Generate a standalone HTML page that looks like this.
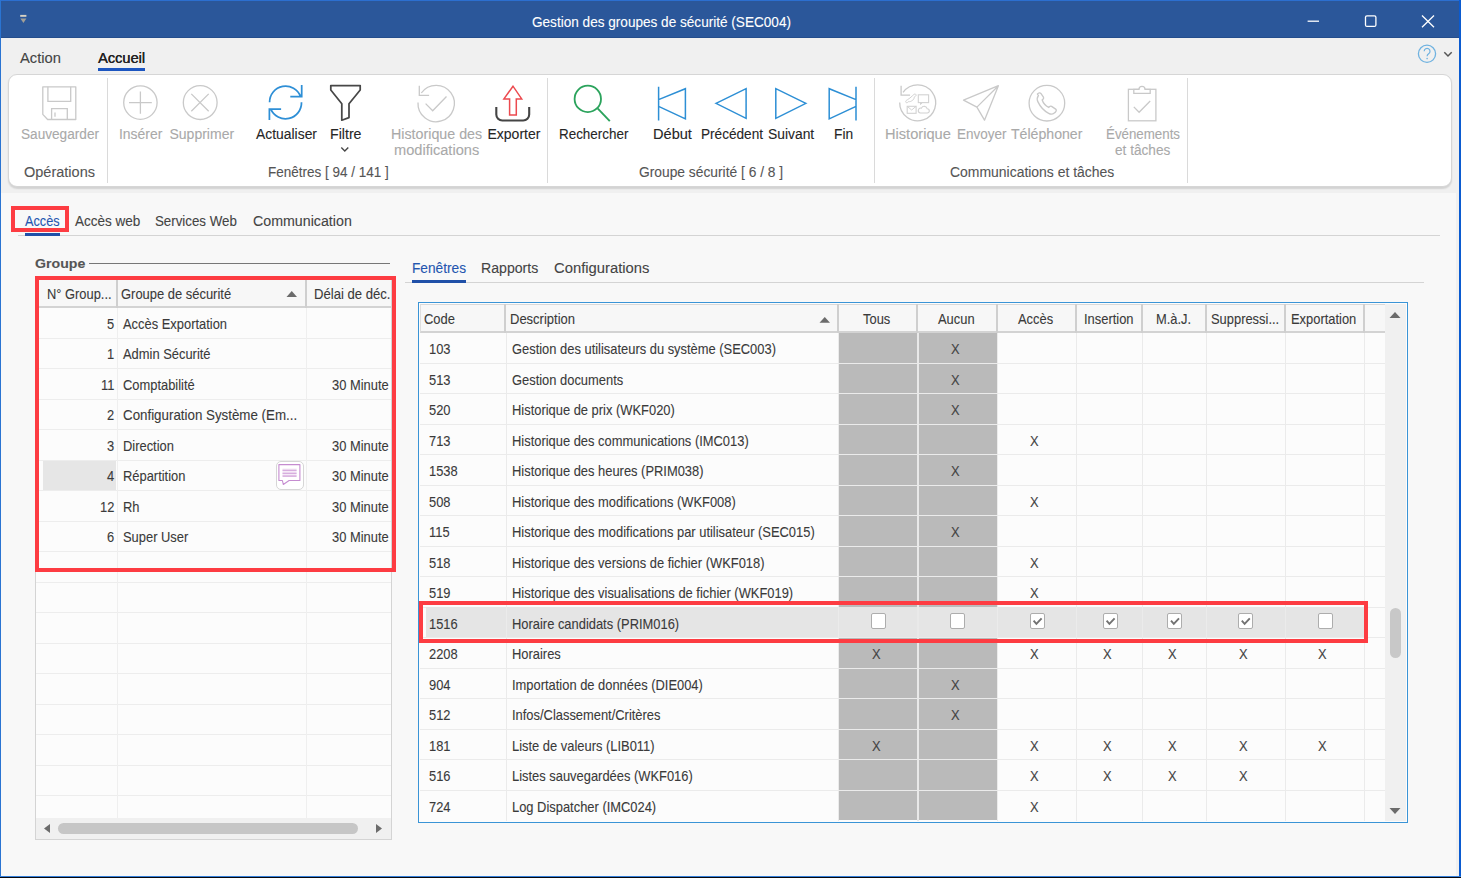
<!DOCTYPE html><html><head><meta charset="utf-8"><style>
html,body{margin:0;padding:0;}
body{width:1461px;height:878px;position:relative;overflow:hidden;background:#f8f8f8;font-family:"Liberation Sans",sans-serif;}
.t{position:absolute;white-space:pre;-webkit-text-stroke:0.1px currentColor;}
.r{position:absolute;box-sizing:border-box;}
svg{position:absolute;overflow:visible;}
</style></head><body>
<div class="r" style="left:0px;top:38px;width:1461px;height:155px;background:#f0f0f0"></div>
<div class="r" style="left:0px;top:0px;width:1461px;height:38px;background:#2b579a"></div>
<div class="r" style="left:0px;top:0px;width:1461px;height:1px;background:#2c6fd0"></div>
<div class="r" style="left:0px;top:37px;width:1461px;height:1px;background:#244d8c"></div>
<div class="t " style="left:531.50px;top:13.28px;font-size:14.5px;line-height:18px;font-weight:normal;color:#ffffff;transform:scaleX(0.9368);transform-origin:0 0;">Gestion des groupes de sécurité (SEC004)</div>
<div class="r" style="left:0px;top:0px;width:1px;height:878px;background:#2a74d2"></div>
<div class="r" style="left:1459px;top:0px;width:2px;height:878px;background:#0b5bd0"></div>
<div class="r" style="left:0px;top:876px;width:1461px;height:1px;background:#3580da"></div>
<div class="r" style="left:0px;top:877px;width:1461px;height:1px;background:#06080e"></div>
<div class="r" style="left:1456px;top:193px;width:3px;height:683px;background:#f0f0f0"></div>
<div class="t " style="left:19.50px;top:48.65px;font-size:14px;line-height:18px;font-weight:normal;color:#444;transform:scaleX(1.0534);transform-origin:0 0;">Action</div>
<div class="t " style="left:97.50px;top:48.65px;font-size:14px;line-height:18px;font-weight:normal;color:#222;transform:scaleX(1.0412);transform-origin:0 0;text-shadow:0.3px 0 0 #222;">Accueil</div>
<div class="r" style="left:98px;top:68px;width:47px;height:3px;background:#1b55c0"></div>
<div class="r" style="left:8px;top:74px;width:1444px;height:113px;background:#fff;border:1px solid #d6d6d6;border-radius:9px;box-shadow:0 1.5px 1.5px rgba(0,0,0,0.12)"></div>
<div class="r" style="left:107px;top:78px;width:1px;height:105px;background:#dadada"></div>
<div class="r" style="left:547px;top:78px;width:1px;height:105px;background:#dadada"></div>
<div class="r" style="left:874px;top:78px;width:1px;height:105px;background:#dadada"></div>
<div class="r" style="left:1187px;top:78px;width:1px;height:105px;background:#dadada"></div>
<div class="t " style="left:20.50px;top:125.05px;font-size:14px;line-height:18px;font-weight:normal;color:#a9a9a9;transform:scaleX(0.9729);transform-origin:0 0;">Sauvegarder</div>
<div class="t " style="left:118.50px;top:125.05px;font-size:14px;line-height:18px;font-weight:normal;color:#a9a9a9;transform:scaleX(0.9936);transform-origin:0 0;">Insérer</div>
<div class="t " style="left:169.50px;top:125.05px;font-size:14px;line-height:18px;font-weight:normal;color:#a9a9a9;">Supprimer</div>
<div class="t " style="left:255.70px;top:125.05px;font-size:14px;line-height:18px;font-weight:normal;color:#262626;transform:scaleX(0.9924);transform-origin:0 0;">Actualiser</div>
<div class="t " style="left:330.00px;top:125.05px;font-size:14px;line-height:18px;font-weight:normal;color:#262626;transform:scaleX(1.0120);transform-origin:0 0;">Filtre</div>
<div class="t " style="left:391.30px;top:125.05px;font-size:14px;line-height:18px;font-weight:normal;color:#a9a9a9;transform:scaleX(1.0190);transform-origin:0 0;">Historique des</div>
<div class="t " style="left:393.60px;top:141.15px;font-size:14px;line-height:18px;font-weight:normal;color:#a9a9a9;transform:scaleX(1.0428);transform-origin:0 0;">modifications</div>
<div class="t " style="left:487.50px;top:125.05px;font-size:14px;line-height:18px;font-weight:normal;color:#262626;">Exporter</div>
<div class="t " style="left:558.50px;top:125.05px;font-size:14px;line-height:18px;font-weight:normal;color:#262626;transform:scaleX(0.9589);transform-origin:0 0;">Rechercher</div>
<div class="t " style="left:653.40px;top:125.05px;font-size:14px;line-height:18px;font-weight:normal;color:#262626;transform:scaleX(1.0412);transform-origin:0 0;">Début</div>
<div class="t " style="left:700.80px;top:125.05px;font-size:14px;line-height:18px;font-weight:normal;color:#262626;transform:scaleX(0.9714);transform-origin:0 0;">Précédent</div>
<div class="t " style="left:768.10px;top:125.05px;font-size:14px;line-height:18px;font-weight:normal;color:#262626;transform:scaleX(0.9892);transform-origin:0 0;">Suivant</div>
<div class="t " style="left:834.10px;top:125.05px;font-size:14px;line-height:18px;font-weight:normal;color:#262626;transform:scaleX(0.9818);transform-origin:0 0;">Fin</div>
<div class="t " style="left:884.90px;top:125.05px;font-size:14px;line-height:18px;font-weight:normal;color:#a9a9a9;transform:scaleX(1.0439);transform-origin:0 0;">Historique</div>
<div class="t " style="left:956.50px;top:125.05px;font-size:14px;line-height:18px;font-weight:normal;color:#a9a9a9;transform:scaleX(0.9638);transform-origin:0 0;">Envoyer</div>
<div class="t " style="left:1011.40px;top:125.05px;font-size:14px;line-height:18px;font-weight:normal;color:#a9a9a9;transform:scaleX(1.0081);transform-origin:0 0;">Téléphoner</div>
<div class="t " style="left:1105.50px;top:125.05px;font-size:14px;line-height:18px;font-weight:normal;color:#a9a9a9;transform:scaleX(0.9508);transform-origin:0 0;">Événements</div>
<div class="t " style="left:1114.50px;top:140.85px;font-size:14px;line-height:18px;font-weight:normal;color:#a9a9a9;transform:scaleX(0.9731);transform-origin:0 0;">et tâches</div>
<div class="t " style="left:24.00px;top:162.95px;font-size:14px;line-height:18px;font-weight:normal;color:#555;transform:scaleX(1.0367);transform-origin:0 0;">Opérations</div>
<div class="t " style="left:267.80px;top:162.95px;font-size:14px;line-height:18px;font-weight:normal;color:#555;transform:scaleX(0.9633);transform-origin:0 0;">Fenêtres [ 94 / 141 ]</div>
<div class="t " style="left:638.90px;top:162.95px;font-size:14px;line-height:18px;font-weight:normal;color:#555;transform:scaleX(0.9857);transform-origin:0 0;">Groupe sécurité [ 6 / 8 ]</div>
<div class="t " style="left:949.70px;top:162.95px;font-size:14px;line-height:18px;font-weight:normal;color:#555;transform:scaleX(0.9959);transform-origin:0 0;">Communications et tâches</div>
<svg style="left:0;top:0" width="1461" height="200" viewBox="0 0 1461 200">
<rect x="20.2" y="14.9" width="6.2" height="1.9" fill="#d8d2c4"/><polygon points="20.4,18.5 26.4,18.5 23.4,22.9" fill="#a29f96"/>
<path d="M1307.6,21.2 H1319" stroke="#fff" stroke-width="1.3"/>
<rect x="1365.5" y="15.8" width="10.4" height="10.6" rx="1.5" fill="none" stroke="#fff" stroke-width="1.3"/>
<path d="M1422,15.5 L1434,27.2 M1434,15.5 L1422,27.2" stroke="#fff" stroke-width="1.3"/>
<circle cx="1427" cy="53.8" r="8.6" fill="none" stroke="#6fb2e0" stroke-width="1.3"/>
<path d="M1424.2,51.2 a2.9,2.9 0 1 1 4.4,2.5 c-1.1,0.7 -1.5,1.3 -1.5,2.6" fill="none" stroke="#6fb2e0" stroke-width="1.2"/><circle cx="1427.1" cy="58.6" r="0.8" fill="#6fb2e0"/>
<path d="M1444.3,52.3 L1448,56 L1451.7,52.3" fill="none" stroke="#555" stroke-width="1.5"/>
<path d="M42.8,86.8 H75.8 V119.5 H47.6 L42.8,114.4 Z" fill="none" stroke="#c9c9c9" stroke-width="1.3" stroke-linejoin="round"/>
<path d="M47.9,86.8 V101.3 H70.7 V86.8" fill="none" stroke="#c9c9c9" stroke-width="1.3"/>
<path d="M51.6,119.5 V108.7 H67.3 V119.5 M55,112.4 V116.7" fill="none" stroke="#c9c9c9" stroke-width="1.3"/>
<circle cx="140.4" cy="102.6" r="16.7" fill="none" stroke="#c9c9c9" stroke-width="1.3"/><path d="M129,102.6 H151.8 M140.4,91.4 V113.8" stroke="#c9c9c9" stroke-width="1.3"/>
<circle cx="200.2" cy="102.6" r="16.9" fill="none" stroke="#c9c9c9" stroke-width="1.3"/><path d="M191.3,93.9 L208.7,111.3 M208.7,93.9 L191.3,111.3" stroke="#c9c9c9" stroke-width="1.3"/>
<path d="M269.6,102.3 A16,16 0 0 1 300.6,96.5 M290.3,96.5 H301.7 V85" fill="none" stroke="#2e8fd6" stroke-width="1.75"/>
<path d="M301.5,102.3 A16,16 0 0 1 270.8,109.1 M281.1,109.1 H269.4 V120.1" fill="none" stroke="#2e8fd6" stroke-width="1.75"/>
<path d="M330.8,85.6 H360.2 V90 L349,103.7 V117.6 L341.8,120.2 V103.7 L330.8,90 Z" fill="none" stroke="#474747" stroke-width="1.75" stroke-linejoin="round"/>
<path d="M341.3,147.6 L344.8,151 L348.3,147.6" fill="none" stroke="#474747" stroke-width="1.4"/>
<path d="M418,102.5 A18.2,18.2 0 1 0 421.3,93" fill="none" stroke="#c9c9c9" stroke-width="1.3"/><path d="M419.3,85.8 V95.3 H429.1" fill="none" stroke="#c9c9c9" stroke-width="1.3"/><path d="M425.6,103.6 L432.7,110.7 L446.5,96.5" fill="none" stroke="#c9c9c9" stroke-width="1.3"/>
<path d="M513,86.2 L503.9,98.9 H509.6 V115.1 H516.3 V98.9 H521.7 Z" fill="none" stroke="#ec4a4f" stroke-width="1.5" stroke-linejoin="miter"/>
<path d="M496.3,107.1 V114.5 A6,6 0 0 0 502.3,120.5 H523.2 A6,6 0 0 0 529.2,114.5 V107.1" fill="none" stroke="#444" stroke-width="2.1"/>
<circle cx="587.8" cy="98.9" r="13.2" fill="none" stroke="#2ba35c" stroke-width="1.8"/><path d="M597.6,108.4 L609.8,121.1" stroke="#2ba35c" stroke-width="1.9"/>
<path d="M658.6,86.8 V120.4 M658.6,99.6 L685.4,88.7 V118.9 L658.6,106.4" fill="none" stroke="#2d8fd5" stroke-width="1.5"/>
<path d="M716,103.3 L746.1,88.7 V118.4 Z" fill="none" stroke="#2d8fd5" stroke-width="1.5"/>
<path d="M805.9,103.3 L775.8,88.7 V118.4 Z" fill="none" stroke="#2d8fd5" stroke-width="1.5"/>
<path d="M856,86.8 V120.4 M856,99.6 L829.2,88.7 V118.9 L856,106.4" fill="none" stroke="#2d8fd5" stroke-width="1.5"/>
<path d="M899.7,102.6 A18,18 0 1 0 903.1,92.3" fill="none" stroke="#c9c9c9" stroke-width="1.3"/><path d="M901.1,85.7 V95.2 H910.1" fill="none" stroke="#c9c9c9" stroke-width="1.3"/>
<rect x="918.3" y="94.8" width="10.3" height="7.8" fill="none" stroke="#d2d2d2" stroke-width="1.1"/><path d="M920.5,102.6 L920.5,104.5 L922.5,102.6" fill="none" stroke="#d2d2d2" stroke-width="1"/>
<path d="M915.6,94.2 c0.9,0.6 0.5,1.6 -0.3,2.2 l-1.2,0.9 c0.2,1.2 -0.6,2.4 -1.8,3.2 c-1.4,1 -2.7,1.4 -3.5,1 l-1,0.8 c-0.8,0.6 -1.9,0.5 -2.1,-0.3 c-0.3,-1 0.8,-1.8 1.8,-2.3 c1.6,-0.8 3.2,-2.3 4.8,-3.8 c1.1,-1 2.4,-2.4 3.3,-1.7 z" fill="none" stroke="#d2d2d2" stroke-width="1"/>
<rect x="907.2" y="106.3" width="8.9" height="7" fill="none" stroke="#d2d2d2" stroke-width="1.1"/><path d="M907.2,106.3 L911.65,110 L916.1,106.3" fill="none" stroke="#d2d2d2" stroke-width="1"/>
<path d="M920.2,113 H927.2 a2.1,2.1 0 0 0 0,-4.2 a3,3 0 0 0 -5.7,-0.7 a2.5,2.5 0 0 0 -1.3,4.9 z" fill="none" stroke="#d2d2d2" stroke-width="1.1"/>
<path d="M963.5,100.1 L998.4,85.7 L984.5,120.2 L976.9,107.1 Z M976.9,107.1 L998.4,85.7" fill="none" stroke="#c9c9c9" stroke-width="1.3" stroke-linejoin="round"/>
<circle cx="1046.9" cy="103.2" r="17.8" fill="none" stroke="#c9c9c9" stroke-width="1.3"/>
<path transform="translate(1037.5,94) scale(1.12) translate(-1037.5,-94.5)" d="M1037.5,94.5 c1,-1 2.3,-1.3 3,-0.5 l2.3,3.3 c0.4,0.7 0.1,1.5 -0.5,2 l-0.6,0.5 c0.8,2.5 3.2,5.3 5.8,6.6 l0.6,-0.6 c0.6,-0.5 1.4,-0.6 2,-0.2 l3.6,2.4 c0.8,0.6 0.7,1.8 -0.2,2.7 l-1,0.8 c-1.5,1.2 -3.3,1.2 -5,0.3 c-4.2,-2.3 -7.7,-6.2 -9.7,-10.5 c-0.8,-1.8 -0.7,-3.8 0.5,-5.4 z" fill="none" stroke="#c9c9c9" stroke-width="1.2"/>
<rect x="1128.4" y="89.3" width="27.5" height="31.5" fill="none" stroke="#c9c9c9" stroke-width="1.3"/><path d="M1133.8,89.3 V93.3 H1150.2 V89.3 H1145 A3,3 0 0 0 1139,89.3 Z" fill="#fff" stroke="#c9c9c9" stroke-width="1.3"/><path d="M1133.8,106.9 L1139.1,112.3 L1150.2,101" fill="none" stroke="#c9c9c9" stroke-width="1.3"/>
</svg>
<div class="r" style="left:18px;top:235px;width:1422px;height:1px;background:#d4d4d4"></div>
<div class="t " style="left:25.10px;top:211.95px;font-size:14px;line-height:18px;font-weight:normal;color:#2456b0;transform:scaleX(0.9075);transform-origin:0 0;">Accès</div>
<div class="t " style="left:74.50px;top:211.95px;font-size:14px;line-height:18px;font-weight:normal;color:#444;transform:scaleX(0.9660);transform-origin:0 0;">Accès web</div>
<div class="t " style="left:155.30px;top:211.95px;font-size:14px;line-height:18px;font-weight:normal;color:#444;transform:scaleX(0.9500);transform-origin:0 0;">Services Web</div>
<div class="t " style="left:253.30px;top:211.95px;font-size:14px;line-height:18px;font-weight:normal;color:#444;transform:scaleX(1.0158);transform-origin:0 0;">Communication</div>
<div class="r" style="left:25px;top:233px;width:35px;height:3px;background:#2050a8"></div>
<div class="r" style="left:11px;top:206px;width:58px;height:26px;border:4px solid #fd3c42"></div>
<div class="t " style="left:34.50px;top:255.02px;font-size:13.5px;line-height:17px;font-weight:bold;color:#555;transform:scaleX(1.0476);transform-origin:0 0;">Groupe</div>
<div class="r" style="left:89px;top:263px;width:301px;height:1px;background:#777"></div>
<div class="r" style="left:35px;top:279px;width:357px;height:561px;background:#fcfcfc;border:1px solid #d4d4d4"></div>
<div class="r" style="left:36px;top:280px;width:355px;height:28px;background:#f7f7f7;border-bottom:2px solid #d3d3d3"></div>
<div class="r" style="left:116px;top:280px;width:2px;height:28px;background:#cfcfcf"></div>
<div class="r" style="left:305px;top:280px;width:2px;height:28px;background:#cfcfcf"></div>
<div class="r" style="left:36px;top:337.5px;width:355px;height:1px;background:#ededed"></div>
<div class="r" style="left:36px;top:368.0px;width:355px;height:1px;background:#ededed"></div>
<div class="r" style="left:36px;top:398.5px;width:355px;height:1px;background:#ededed"></div>
<div class="r" style="left:36px;top:429.0px;width:355px;height:1px;background:#ededed"></div>
<div class="r" style="left:36px;top:459.5px;width:355px;height:1px;background:#ededed"></div>
<div class="r" style="left:36px;top:490.0px;width:355px;height:1px;background:#ededed"></div>
<div class="r" style="left:36px;top:520.5px;width:355px;height:1px;background:#ededed"></div>
<div class="r" style="left:36px;top:551.0px;width:355px;height:1px;background:#ededed"></div>
<div class="r" style="left:36px;top:581.5px;width:355px;height:1px;background:#ededed"></div>
<div class="r" style="left:36px;top:612.0px;width:355px;height:1px;background:#ededed"></div>
<div class="r" style="left:36px;top:642.5px;width:355px;height:1px;background:#ededed"></div>
<div class="r" style="left:36px;top:673.0px;width:355px;height:1px;background:#ededed"></div>
<div class="r" style="left:36px;top:703.5px;width:355px;height:1px;background:#ededed"></div>
<div class="r" style="left:36px;top:734.0px;width:355px;height:1px;background:#ededed"></div>
<div class="r" style="left:36px;top:764.5px;width:355px;height:1px;background:#ededed"></div>
<div class="r" style="left:36px;top:795.0px;width:355px;height:1px;background:#ededed"></div>
<div class="r" style="left:117px;top:308px;width:1px;height:510px;background:#efefef"></div>
<div class="r" style="left:306px;top:308px;width:1px;height:510px;background:#efefef"></div>
<div class="t " style="left:46.90px;top:284.88px;font-size:14.5px;line-height:18px;font-weight:normal;color:#3a3a3a;transform:scaleX(0.8887);transform-origin:0 0;">N° Group...</div>
<div class="t " style="left:120.70px;top:284.88px;font-size:14.5px;line-height:18px;font-weight:normal;color:#3a3a3a;transform:scaleX(0.8927);transform-origin:0 0;">Groupe de sécurité</div>
<div class="t " style="left:313.90px;top:284.88px;font-size:14.5px;line-height:18px;font-weight:normal;color:#3a3a3a;transform:scaleX(0.9026);transform-origin:0 0;">Délai de déc.</div>
<svg style="left:0;top:0" width="1" height="1"><polygon points="286.5,297 297,297 291.75,291" fill="#6b6b6b"/></svg>
<div class="r" style="left:43px;top:461px;width:73px;height:29px;background:#e6e6e6"></div>
<div class="t " style="left:106.81px;top:314.98px;font-size:14.5px;line-height:18px;font-weight:normal;color:#3a3a3a;transform:scaleX(0.8900);transform-origin:0 0;">5</div>
<div class="t " style="left:122.60px;top:314.98px;font-size:14.5px;line-height:18px;font-weight:normal;color:#3a3a3a;transform:scaleX(0.8900);transform-origin:0 0;">Accès Exportation</div>
<div class="t " style="left:106.81px;top:345.48px;font-size:14.5px;line-height:18px;font-weight:normal;color:#3a3a3a;transform:scaleX(0.8900);transform-origin:0 0;">1</div>
<div class="t " style="left:122.60px;top:345.48px;font-size:14.5px;line-height:18px;font-weight:normal;color:#3a3a3a;transform:scaleX(0.8900);transform-origin:0 0;">Admin Sécurité</div>
<div class="t " style="left:100.59px;top:375.98px;font-size:14.5px;line-height:18px;font-weight:normal;color:#3a3a3a;transform:scaleX(0.8900);transform-origin:0 0;">11</div>
<div class="t " style="left:122.60px;top:375.98px;font-size:14.5px;line-height:18px;font-weight:normal;color:#3a3a3a;transform:scaleX(0.8900);transform-origin:0 0;">Comptabilité</div>
<div class="t " style="left:331.70px;top:375.98px;font-size:14.5px;line-height:18px;font-weight:normal;color:#3a3a3a;transform:scaleX(0.8900);transform-origin:0 0;">30 Minute</div>
<div class="t " style="left:106.81px;top:406.48px;font-size:14.5px;line-height:18px;font-weight:normal;color:#3a3a3a;transform:scaleX(0.8900);transform-origin:0 0;">2</div>
<div class="t " style="left:122.60px;top:406.48px;font-size:14.5px;line-height:18px;font-weight:normal;color:#3a3a3a;transform:scaleX(0.9193);transform-origin:0 0;">Configuration Système (Em...</div>
<div class="t " style="left:106.81px;top:436.98px;font-size:14.5px;line-height:18px;font-weight:normal;color:#3a3a3a;transform:scaleX(0.8900);transform-origin:0 0;">3</div>
<div class="t " style="left:122.60px;top:436.98px;font-size:14.5px;line-height:18px;font-weight:normal;color:#3a3a3a;transform:scaleX(0.8900);transform-origin:0 0;">Direction</div>
<div class="t " style="left:331.70px;top:436.98px;font-size:14.5px;line-height:18px;font-weight:normal;color:#3a3a3a;transform:scaleX(0.8900);transform-origin:0 0;">30 Minute</div>
<div class="t " style="left:106.81px;top:467.48px;font-size:14.5px;line-height:18px;font-weight:normal;color:#3a3a3a;transform:scaleX(0.8900);transform-origin:0 0;">4</div>
<div class="t " style="left:122.60px;top:467.48px;font-size:14.5px;line-height:18px;font-weight:normal;color:#3a3a3a;transform:scaleX(0.8900);transform-origin:0 0;">Répartition</div>
<div class="t " style="left:331.70px;top:467.48px;font-size:14.5px;line-height:18px;font-weight:normal;color:#3a3a3a;transform:scaleX(0.8900);transform-origin:0 0;">30 Minute</div>
<div class="t " style="left:99.63px;top:497.98px;font-size:14.5px;line-height:18px;font-weight:normal;color:#3a3a3a;transform:scaleX(0.8900);transform-origin:0 0;">12</div>
<div class="t " style="left:122.60px;top:497.98px;font-size:14.5px;line-height:18px;font-weight:normal;color:#3a3a3a;transform:scaleX(0.8900);transform-origin:0 0;">Rh</div>
<div class="t " style="left:331.70px;top:497.98px;font-size:14.5px;line-height:18px;font-weight:normal;color:#3a3a3a;transform:scaleX(0.8900);transform-origin:0 0;">30 Minute</div>
<div class="t " style="left:106.81px;top:528.48px;font-size:14.5px;line-height:18px;font-weight:normal;color:#3a3a3a;transform:scaleX(0.8900);transform-origin:0 0;">6</div>
<div class="t " style="left:122.60px;top:528.48px;font-size:14.5px;line-height:18px;font-weight:normal;color:#3a3a3a;transform:scaleX(0.8900);transform-origin:0 0;">Super User</div>
<div class="t " style="left:331.70px;top:528.48px;font-size:14.5px;line-height:18px;font-weight:normal;color:#3a3a3a;transform:scaleX(0.8900);transform-origin:0 0;">30 Minute</div>
<div class="r" style="left:391px;top:279px;width:5px;height:292px;background:#f7f7f7"></div>
<div class="r" style="left:391px;top:279px;width:1px;height:561px;background:#d4d4d4"></div>
<div class="r" style="left:275.5px;top:460.5px;width:28.5px;height:29px;background:#fff;border:1.5px solid #d6d6d6;border-radius:5px"></div>
<svg style="left:0;top:0" width="1" height="1"><path d="M278.9,464.6 H299.9 V480.5 H289.1 L283.3,484.5 L282.4,480.5 H278.9 Z" fill="#fff" stroke="#c58cd0" stroke-width="1.1" stroke-linejoin="round"/><path d="M282.5,470.3 H296.6 M282.5,473.3 H296.6 M282.5,476.1 H296.6" stroke="#cf9fd8" stroke-width="1.1"/><rect x="282.5" y="468.5" width="14.1" height="7.5" fill="#c58cd0" fill-opacity="0.18"/></svg>
<div class="r" style="left:36px;top:818px;width:355px;height:21px;background:#f0f0f0"></div>
<div class="r" style="left:58px;top:823px;width:300px;height:11px;background:#c6c6c6;border-radius:5.5px"></div>
<svg style="left:0;top:0" width="1" height="1"><polygon points="44,828.5 50,824 50,833" fill="#6b6b6b"/><polygon points="382,828.5 376,824 376,833" fill="#6b6b6b"/></svg>
<div class="r" style="left:35px;top:276px;width:361px;height:295.5px;border:4px solid #fd3c42"></div>
<div class="r" style="left:405px;top:282px;width:1019px;height:1px;background:#d4d4d4"></div>
<div class="t " style="left:411.50px;top:259.35px;font-size:14px;line-height:18px;font-weight:normal;color:#2456b0;transform:scaleX(0.9774);transform-origin:0 0;">Fenêtres</div>
<div class="t " style="left:481.20px;top:259.35px;font-size:14px;line-height:18px;font-weight:normal;color:#444;transform:scaleX(1.0086);transform-origin:0 0;">Rapports</div>
<div class="t " style="left:554.20px;top:259.35px;font-size:14px;line-height:18px;font-weight:normal;color:#444;transform:scaleX(1.0567);transform-origin:0 0;">Configurations</div>
<div class="r" style="left:412px;top:280px;width:54px;height:3px;background:#2050a8"></div>
<div class="r" style="left:418px;top:302px;width:990px;height:521px;background:#fcfcfc;border:1px solid #3a94d6"></div>
<div class="r" style="left:420px;top:304px;width:965px;height:29px;background:#f7f7f7;border-top:1px solid #d9d9d9;border-left:1px solid #dedede;border-bottom:2px solid #d3d3d3"></div>
<div class="r" style="left:504px;top:304px;width:2px;height:29px;background:#cfcfcf"></div>
<div class="r" style="left:837px;top:304px;width:2px;height:29px;background:#cfcfcf"></div>
<div class="r" style="left:916px;top:304px;width:2px;height:29px;background:#cfcfcf"></div>
<div class="r" style="left:996px;top:304px;width:2px;height:29px;background:#cfcfcf"></div>
<div class="r" style="left:1075px;top:304px;width:2px;height:29px;background:#cfcfcf"></div>
<div class="r" style="left:1141px;top:304px;width:2px;height:29px;background:#cfcfcf"></div>
<div class="r" style="left:1205px;top:304px;width:2px;height:29px;background:#cfcfcf"></div>
<div class="r" style="left:1284px;top:304px;width:2px;height:29px;background:#cfcfcf"></div>
<div class="r" style="left:1363px;top:304px;width:2px;height:29px;background:#cfcfcf"></div>
<div class="r" style="left:1385px;top:304px;width:21px;height:517px;background:#f0f0f0"></div>
<svg style="left:0;top:0" width="1" height="1"><polygon points="1389.5,318 1400.5,318 1395,312" fill="#6b6b6b"/><polygon points="1389.5,808 1400.5,808 1395,814" fill="#6b6b6b"/><polygon points="819.5,322.7 830,322.7 824.75,317" fill="#6b6b6b"/></svg>
<div class="r" style="left:1390px;top:608px;width:11px;height:50px;background:#c8c8c8;border-radius:5.5px"></div>
<div class="t " style="left:424.10px;top:310.48px;font-size:14.5px;line-height:18px;font-weight:normal;color:#3a3a3a;transform:scaleX(0.8941);transform-origin:0 0;">Code</div>
<div class="t " style="left:510.00px;top:310.48px;font-size:14.5px;line-height:18px;font-weight:normal;color:#3a3a3a;transform:scaleX(0.8962);transform-origin:0 0;">Description</div>
<div class="t " style="left:863.36px;top:310.48px;font-size:14.5px;line-height:18px;font-weight:normal;color:#3a3a3a;transform:scaleX(0.8900);transform-origin:0 0;">Tous</div>
<div class="t " style="left:938.20px;top:310.48px;font-size:14.5px;line-height:18px;font-weight:normal;color:#3a3a3a;transform:scaleX(0.8900);transform-origin:0 0;">Aucun</div>
<div class="t " style="left:1018.42px;top:310.48px;font-size:14.5px;line-height:18px;font-weight:normal;color:#3a3a3a;transform:scaleX(0.8900);transform-origin:0 0;">Accès</div>
<div class="t " style="left:1083.75px;top:310.48px;font-size:14.5px;line-height:18px;font-weight:normal;color:#3a3a3a;transform:scaleX(0.8900);transform-origin:0 0;">Insertion</div>
<div class="t " style="left:1155.93px;top:310.48px;font-size:14.5px;line-height:18px;font-weight:normal;color:#3a3a3a;transform:scaleX(0.8900);transform-origin:0 0;">M.à.J.</div>
<div class="t " style="left:1210.92px;top:310.48px;font-size:14.5px;line-height:18px;font-weight:normal;color:#3a3a3a;transform:scaleX(0.8900);transform-origin:0 0;">Suppressi...</div>
<div class="t " style="left:1291.36px;top:310.48px;font-size:14.5px;line-height:18px;font-weight:normal;color:#3a3a3a;transform:scaleX(0.8900);transform-origin:0 0;">Exportation</div>
<div class="r" style="left:839px;top:333.0px;width:78px;height:29.5px;background:#bababa"></div>
<div class="r" style="left:919px;top:333.0px;width:78px;height:29.5px;background:#bababa"></div>
<div class="r" style="left:420px;top:362.5px;width:965px;height:1px;background:#ebebeb"></div>
<div class="r" style="left:839px;top:363.5px;width:78px;height:29.5px;background:#bababa"></div>
<div class="r" style="left:919px;top:363.5px;width:78px;height:29.5px;background:#bababa"></div>
<div class="r" style="left:420px;top:393.0px;width:965px;height:1px;background:#ebebeb"></div>
<div class="r" style="left:839px;top:394.0px;width:78px;height:29.5px;background:#bababa"></div>
<div class="r" style="left:919px;top:394.0px;width:78px;height:29.5px;background:#bababa"></div>
<div class="r" style="left:420px;top:423.5px;width:965px;height:1px;background:#ebebeb"></div>
<div class="r" style="left:839px;top:424.5px;width:78px;height:29.5px;background:#bababa"></div>
<div class="r" style="left:919px;top:424.5px;width:78px;height:29.5px;background:#bababa"></div>
<div class="r" style="left:420px;top:454.0px;width:965px;height:1px;background:#ebebeb"></div>
<div class="r" style="left:839px;top:455.0px;width:78px;height:29.5px;background:#bababa"></div>
<div class="r" style="left:919px;top:455.0px;width:78px;height:29.5px;background:#bababa"></div>
<div class="r" style="left:420px;top:484.5px;width:965px;height:1px;background:#ebebeb"></div>
<div class="r" style="left:839px;top:485.5px;width:78px;height:29.5px;background:#bababa"></div>
<div class="r" style="left:919px;top:485.5px;width:78px;height:29.5px;background:#bababa"></div>
<div class="r" style="left:420px;top:515.0px;width:965px;height:1px;background:#ebebeb"></div>
<div class="r" style="left:839px;top:516.0px;width:78px;height:29.5px;background:#bababa"></div>
<div class="r" style="left:919px;top:516.0px;width:78px;height:29.5px;background:#bababa"></div>
<div class="r" style="left:420px;top:545.5px;width:965px;height:1px;background:#ebebeb"></div>
<div class="r" style="left:839px;top:546.5px;width:78px;height:29.5px;background:#bababa"></div>
<div class="r" style="left:919px;top:546.5px;width:78px;height:29.5px;background:#bababa"></div>
<div class="r" style="left:420px;top:576.0px;width:965px;height:1px;background:#ebebeb"></div>
<div class="r" style="left:839px;top:577.0px;width:78px;height:29.5px;background:#bababa"></div>
<div class="r" style="left:919px;top:577.0px;width:78px;height:29.5px;background:#bababa"></div>
<div class="r" style="left:420px;top:606.5px;width:965px;height:1px;background:#ebebeb"></div>
<div class="r" style="left:426px;top:607px;width:938px;height:31px;background:#e5e5e5"></div>
<div class="r" style="left:420px;top:637.0px;width:965px;height:1px;background:#ebebeb"></div>
<div class="r" style="left:839px;top:638.0px;width:78px;height:29.5px;background:#bababa"></div>
<div class="r" style="left:919px;top:638.0px;width:78px;height:29.5px;background:#bababa"></div>
<div class="r" style="left:420px;top:667.5px;width:965px;height:1px;background:#ebebeb"></div>
<div class="r" style="left:839px;top:668.5px;width:78px;height:29.5px;background:#bababa"></div>
<div class="r" style="left:919px;top:668.5px;width:78px;height:29.5px;background:#bababa"></div>
<div class="r" style="left:420px;top:698.0px;width:965px;height:1px;background:#ebebeb"></div>
<div class="r" style="left:839px;top:699.0px;width:78px;height:29.5px;background:#bababa"></div>
<div class="r" style="left:919px;top:699.0px;width:78px;height:29.5px;background:#bababa"></div>
<div class="r" style="left:420px;top:728.5px;width:965px;height:1px;background:#ebebeb"></div>
<div class="r" style="left:839px;top:729.5px;width:78px;height:29.5px;background:#bababa"></div>
<div class="r" style="left:919px;top:729.5px;width:78px;height:29.5px;background:#bababa"></div>
<div class="r" style="left:420px;top:759.0px;width:965px;height:1px;background:#ebebeb"></div>
<div class="r" style="left:839px;top:760.0px;width:78px;height:29.5px;background:#bababa"></div>
<div class="r" style="left:919px;top:760.0px;width:78px;height:29.5px;background:#bababa"></div>
<div class="r" style="left:420px;top:789.5px;width:965px;height:1px;background:#ebebeb"></div>
<div class="r" style="left:839px;top:790.5px;width:78px;height:29.5px;background:#bababa"></div>
<div class="r" style="left:919px;top:790.5px;width:78px;height:29.5px;background:#bababa"></div>
<div class="r" style="left:506px;top:333px;width:1px;height:488px;background:#ebebeb"></div>
<div class="r" style="left:838px;top:333px;width:1px;height:488px;background:#ebebeb"></div>
<div class="r" style="left:997px;top:333px;width:1px;height:488px;background:#ebebeb"></div>
<div class="r" style="left:1076px;top:333px;width:1px;height:488px;background:#ebebeb"></div>
<div class="r" style="left:1142px;top:333px;width:1px;height:488px;background:#ebebeb"></div>
<div class="r" style="left:1206px;top:333px;width:1px;height:488px;background:#ebebeb"></div>
<div class="r" style="left:1285px;top:333px;width:1px;height:488px;background:#ebebeb"></div>
<div class="r" style="left:1364px;top:333px;width:1px;height:488px;background:#ebebeb"></div>
<div class="r" style="left:917px;top:333px;width:2px;height:488px;background:#e9e9e9"></div>
<div class="t " style="left:428.80px;top:340.28px;font-size:14.5px;line-height:18px;font-weight:normal;color:#3a3a3a;transform:scaleX(0.8900);transform-origin:0 0;">103</div>
<div class="t " style="left:511.80px;top:340.28px;font-size:14.5px;line-height:18px;font-weight:normal;color:#3a3a3a;transform:scaleX(0.8900);transform-origin:0 0;">Gestion des utilisateurs du système (SEC003)</div>
<div class="t " style="left:950.50px;top:340.28px;font-size:14.5px;line-height:18px;font-weight:normal;color:#444;transform:scaleX(0.8900);transform-origin:0 0;">X</div>
<div class="t " style="left:428.80px;top:370.78px;font-size:14.5px;line-height:18px;font-weight:normal;color:#3a3a3a;transform:scaleX(0.8900);transform-origin:0 0;">513</div>
<div class="t " style="left:511.80px;top:370.78px;font-size:14.5px;line-height:18px;font-weight:normal;color:#3a3a3a;transform:scaleX(0.8900);transform-origin:0 0;">Gestion documents</div>
<div class="t " style="left:950.50px;top:370.78px;font-size:14.5px;line-height:18px;font-weight:normal;color:#444;transform:scaleX(0.8900);transform-origin:0 0;">X</div>
<div class="t " style="left:428.80px;top:401.28px;font-size:14.5px;line-height:18px;font-weight:normal;color:#3a3a3a;transform:scaleX(0.8900);transform-origin:0 0;">520</div>
<div class="t " style="left:511.80px;top:401.28px;font-size:14.5px;line-height:18px;font-weight:normal;color:#3a3a3a;transform:scaleX(0.8900);transform-origin:0 0;">Historique de prix (WKF020)</div>
<div class="t " style="left:950.50px;top:401.28px;font-size:14.5px;line-height:18px;font-weight:normal;color:#444;transform:scaleX(0.8900);transform-origin:0 0;">X</div>
<div class="t " style="left:428.80px;top:431.78px;font-size:14.5px;line-height:18px;font-weight:normal;color:#3a3a3a;transform:scaleX(0.8900);transform-origin:0 0;">713</div>
<div class="t " style="left:511.80px;top:431.78px;font-size:14.5px;line-height:18px;font-weight:normal;color:#3a3a3a;transform:scaleX(0.8900);transform-origin:0 0;">Historique des communications (IMC013)</div>
<div class="t " style="left:1030.40px;top:431.78px;font-size:14.5px;line-height:18px;font-weight:normal;color:#444;transform:scaleX(0.8900);transform-origin:0 0;">X</div>
<div class="t " style="left:428.80px;top:462.28px;font-size:14.5px;line-height:18px;font-weight:normal;color:#3a3a3a;transform:scaleX(0.8900);transform-origin:0 0;">1538</div>
<div class="t " style="left:511.80px;top:462.28px;font-size:14.5px;line-height:18px;font-weight:normal;color:#3a3a3a;transform:scaleX(0.8900);transform-origin:0 0;">Historique des heures (PRIM038)</div>
<div class="t " style="left:950.50px;top:462.28px;font-size:14.5px;line-height:18px;font-weight:normal;color:#444;transform:scaleX(0.8900);transform-origin:0 0;">X</div>
<div class="t " style="left:428.80px;top:492.78px;font-size:14.5px;line-height:18px;font-weight:normal;color:#3a3a3a;transform:scaleX(0.8900);transform-origin:0 0;">508</div>
<div class="t " style="left:511.80px;top:492.78px;font-size:14.5px;line-height:18px;font-weight:normal;color:#3a3a3a;transform:scaleX(0.8900);transform-origin:0 0;">Historique des modifications (WKF008)</div>
<div class="t " style="left:1030.40px;top:492.78px;font-size:14.5px;line-height:18px;font-weight:normal;color:#444;transform:scaleX(0.8900);transform-origin:0 0;">X</div>
<div class="t " style="left:428.80px;top:523.28px;font-size:14.5px;line-height:18px;font-weight:normal;color:#3a3a3a;transform:scaleX(0.8900);transform-origin:0 0;">115</div>
<div class="t " style="left:511.80px;top:523.28px;font-size:14.5px;line-height:18px;font-weight:normal;color:#3a3a3a;transform:scaleX(0.8900);transform-origin:0 0;">Historique des modifications par utilisateur (SEC015)</div>
<div class="t " style="left:950.50px;top:523.28px;font-size:14.5px;line-height:18px;font-weight:normal;color:#444;transform:scaleX(0.8900);transform-origin:0 0;">X</div>
<div class="t " style="left:428.80px;top:553.78px;font-size:14.5px;line-height:18px;font-weight:normal;color:#3a3a3a;transform:scaleX(0.8900);transform-origin:0 0;">518</div>
<div class="t " style="left:511.80px;top:553.78px;font-size:14.5px;line-height:18px;font-weight:normal;color:#3a3a3a;transform:scaleX(0.8900);transform-origin:0 0;">Historique des versions de fichier (WKF018)</div>
<div class="t " style="left:1030.40px;top:553.78px;font-size:14.5px;line-height:18px;font-weight:normal;color:#444;transform:scaleX(0.8900);transform-origin:0 0;">X</div>
<div class="t " style="left:428.80px;top:584.28px;font-size:14.5px;line-height:18px;font-weight:normal;color:#3a3a3a;transform:scaleX(0.8900);transform-origin:0 0;">519</div>
<div class="t " style="left:511.80px;top:584.28px;font-size:14.5px;line-height:18px;font-weight:normal;color:#3a3a3a;transform:scaleX(0.8900);transform-origin:0 0;">Historique des visualisations de fichier (WKF019)</div>
<div class="t " style="left:1030.40px;top:584.28px;font-size:14.5px;line-height:18px;font-weight:normal;color:#444;transform:scaleX(0.8900);transform-origin:0 0;">X</div>
<div class="t " style="left:428.80px;top:614.78px;font-size:14.5px;line-height:18px;font-weight:normal;color:#3a3a3a;transform:scaleX(0.8900);transform-origin:0 0;">1516</div>
<div class="t " style="left:511.80px;top:614.78px;font-size:14.5px;line-height:18px;font-weight:normal;color:#3a3a3a;transform:scaleX(0.8900);transform-origin:0 0;">Horaire candidats (PRIM016)</div>
<div class="t " style="left:428.80px;top:645.28px;font-size:14.5px;line-height:18px;font-weight:normal;color:#3a3a3a;transform:scaleX(0.8900);transform-origin:0 0;">2208</div>
<div class="t " style="left:511.80px;top:645.28px;font-size:14.5px;line-height:18px;font-weight:normal;color:#3a3a3a;transform:scaleX(0.8900);transform-origin:0 0;">Horaires</div>
<div class="t " style="left:871.90px;top:645.28px;font-size:14.5px;line-height:18px;font-weight:normal;color:#444;transform:scaleX(0.8900);transform-origin:0 0;">X</div>
<div class="t " style="left:1030.40px;top:645.28px;font-size:14.5px;line-height:18px;font-weight:normal;color:#444;transform:scaleX(0.8900);transform-origin:0 0;">X</div>
<div class="t " style="left:1103.40px;top:645.28px;font-size:14.5px;line-height:18px;font-weight:normal;color:#444;transform:scaleX(0.8900);transform-origin:0 0;">X</div>
<div class="t " style="left:1167.70px;top:645.28px;font-size:14.5px;line-height:18px;font-weight:normal;color:#444;transform:scaleX(0.8900);transform-origin:0 0;">X</div>
<div class="t " style="left:1238.60px;top:645.28px;font-size:14.5px;line-height:18px;font-weight:normal;color:#444;transform:scaleX(0.8900);transform-origin:0 0;">X</div>
<div class="t " style="left:1317.60px;top:645.28px;font-size:14.5px;line-height:18px;font-weight:normal;color:#444;transform:scaleX(0.8900);transform-origin:0 0;">X</div>
<div class="t " style="left:428.80px;top:675.78px;font-size:14.5px;line-height:18px;font-weight:normal;color:#3a3a3a;transform:scaleX(0.8900);transform-origin:0 0;">904</div>
<div class="t " style="left:511.80px;top:675.78px;font-size:14.5px;line-height:18px;font-weight:normal;color:#3a3a3a;transform:scaleX(0.8900);transform-origin:0 0;">Importation de données (DIE004)</div>
<div class="t " style="left:950.50px;top:675.78px;font-size:14.5px;line-height:18px;font-weight:normal;color:#444;transform:scaleX(0.8900);transform-origin:0 0;">X</div>
<div class="t " style="left:428.80px;top:706.28px;font-size:14.5px;line-height:18px;font-weight:normal;color:#3a3a3a;transform:scaleX(0.8900);transform-origin:0 0;">512</div>
<div class="t " style="left:511.80px;top:706.28px;font-size:14.5px;line-height:18px;font-weight:normal;color:#3a3a3a;transform:scaleX(0.8900);transform-origin:0 0;">Infos/Classement/Critères</div>
<div class="t " style="left:950.50px;top:706.28px;font-size:14.5px;line-height:18px;font-weight:normal;color:#444;transform:scaleX(0.8900);transform-origin:0 0;">X</div>
<div class="t " style="left:428.80px;top:736.78px;font-size:14.5px;line-height:18px;font-weight:normal;color:#3a3a3a;transform:scaleX(0.8900);transform-origin:0 0;">181</div>
<div class="t " style="left:511.80px;top:736.78px;font-size:14.5px;line-height:18px;font-weight:normal;color:#3a3a3a;transform:scaleX(0.8900);transform-origin:0 0;">Liste de valeurs (LIB011)</div>
<div class="t " style="left:871.90px;top:736.78px;font-size:14.5px;line-height:18px;font-weight:normal;color:#444;transform:scaleX(0.8900);transform-origin:0 0;">X</div>
<div class="t " style="left:1030.40px;top:736.78px;font-size:14.5px;line-height:18px;font-weight:normal;color:#444;transform:scaleX(0.8900);transform-origin:0 0;">X</div>
<div class="t " style="left:1103.40px;top:736.78px;font-size:14.5px;line-height:18px;font-weight:normal;color:#444;transform:scaleX(0.8900);transform-origin:0 0;">X</div>
<div class="t " style="left:1167.70px;top:736.78px;font-size:14.5px;line-height:18px;font-weight:normal;color:#444;transform:scaleX(0.8900);transform-origin:0 0;">X</div>
<div class="t " style="left:1238.60px;top:736.78px;font-size:14.5px;line-height:18px;font-weight:normal;color:#444;transform:scaleX(0.8900);transform-origin:0 0;">X</div>
<div class="t " style="left:1317.60px;top:736.78px;font-size:14.5px;line-height:18px;font-weight:normal;color:#444;transform:scaleX(0.8900);transform-origin:0 0;">X</div>
<div class="t " style="left:428.80px;top:767.28px;font-size:14.5px;line-height:18px;font-weight:normal;color:#3a3a3a;transform:scaleX(0.8900);transform-origin:0 0;">516</div>
<div class="t " style="left:511.80px;top:767.28px;font-size:14.5px;line-height:18px;font-weight:normal;color:#3a3a3a;transform:scaleX(0.8900);transform-origin:0 0;">Listes sauvegardées (WKF016)</div>
<div class="t " style="left:1030.40px;top:767.28px;font-size:14.5px;line-height:18px;font-weight:normal;color:#444;transform:scaleX(0.8900);transform-origin:0 0;">X</div>
<div class="t " style="left:1103.40px;top:767.28px;font-size:14.5px;line-height:18px;font-weight:normal;color:#444;transform:scaleX(0.8900);transform-origin:0 0;">X</div>
<div class="t " style="left:1167.70px;top:767.28px;font-size:14.5px;line-height:18px;font-weight:normal;color:#444;transform:scaleX(0.8900);transform-origin:0 0;">X</div>
<div class="t " style="left:1238.60px;top:767.28px;font-size:14.5px;line-height:18px;font-weight:normal;color:#444;transform:scaleX(0.8900);transform-origin:0 0;">X</div>
<div class="t " style="left:428.80px;top:797.78px;font-size:14.5px;line-height:18px;font-weight:normal;color:#3a3a3a;transform:scaleX(0.8900);transform-origin:0 0;">724</div>
<div class="t " style="left:511.80px;top:797.78px;font-size:14.5px;line-height:18px;font-weight:normal;color:#3a3a3a;transform:scaleX(0.8900);transform-origin:0 0;">Log Dispatcher (IMC024)</div>
<div class="t " style="left:1030.40px;top:797.78px;font-size:14.5px;line-height:18px;font-weight:normal;color:#444;transform:scaleX(0.8900);transform-origin:0 0;">X</div>
<div class="r" style="left:871.3px;top:613px;width:15px;height:16px;background:#fff;border:1px solid #adadad;border-radius:2px"></div>
<div class="r" style="left:950.4px;top:613px;width:15px;height:16px;background:#fff;border:1px solid #adadad;border-radius:2px"></div>
<div class="r" style="left:1029.8px;top:613px;width:15px;height:16px;background:#fff;border:1px solid #adadad;border-radius:2px"></div>
<svg style="left:0;top:0" width="1" height="1"><path d="M1033.6,620.7 L1036.3999999999999,623.9 L1041.6,618.3" fill="none" stroke="#727272" stroke-width="1.9"/></svg>
<div class="r" style="left:1102.8px;top:613px;width:15px;height:16px;background:#fff;border:1px solid #adadad;border-radius:2px"></div>
<svg style="left:0;top:0" width="1" height="1"><path d="M1106.6,620.7 L1109.3999999999999,623.9 L1114.6,618.3" fill="none" stroke="#727272" stroke-width="1.9"/></svg>
<div class="r" style="left:1167.2px;top:613px;width:15px;height:16px;background:#fff;border:1px solid #adadad;border-radius:2px"></div>
<svg style="left:0;top:0" width="1" height="1"><path d="M1171.0,620.7 L1173.8,623.9 L1179.0,618.3" fill="none" stroke="#727272" stroke-width="1.9"/></svg>
<div class="r" style="left:1238.0px;top:613px;width:15px;height:16px;background:#fff;border:1px solid #adadad;border-radius:2px"></div>
<svg style="left:0;top:0" width="1" height="1"><path d="M1241.8,620.7 L1244.6,623.9 L1249.8,618.3" fill="none" stroke="#727272" stroke-width="1.9"/></svg>
<div class="r" style="left:1317.5px;top:613px;width:15px;height:16px;background:#fff;border:1px solid #adadad;border-radius:2px"></div>
<div class="r" style="left:419px;top:601px;width:949px;height:42px;border:4px solid #fd3c42"></div>
</body></html>
